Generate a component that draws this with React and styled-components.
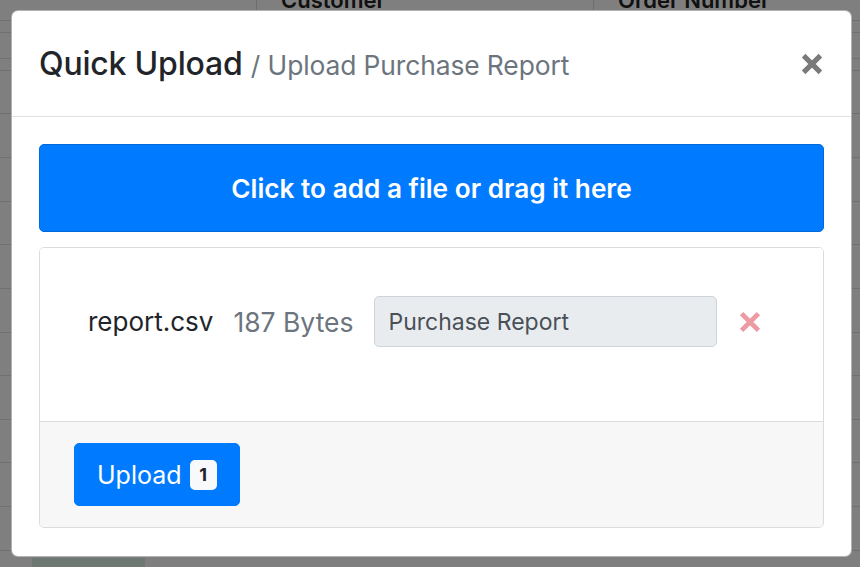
import React from "react";
import styled, { createGlobalStyle } from "styled-components";

const Global = createGlobalStyle`
  html, body { margin: 0; padding: 0; }
  body {
    width: 860px; height: 567px; overflow: hidden;
    background: #fff;
    font-family: Inter, "Noto Sans", "Liberation Sans", sans-serif;
  }
`;

const Page = styled.div`
  position: relative;
  width: 860px;
  height: 567px;
  overflow: hidden;
`;

const Table = styled.div`
  display: flex;
  flex-direction: column;
  margin-top: -20px;
`;

const Row = styled.div`
  display: grid;
  grid-template-columns: 256px 337px 1fr;
  height: ${(p) => p.$h}px;
  border-bottom: 1px solid #e0e0e0;
  box-sizing: border-box;
  align-items: center;
  font-size: 22px;
  color: #222;
`;

const Cell = styled.div`
  padding-left: ${(p) => p.$pad ?? 24}px;
  height: 100%;
  display: flex;
  align-items: ${(p) => (p.$top ? "flex-start" : "center")};
  padding-top: ${(p) => p.$top ?? 0}px;
  box-sizing: border-box;
  border-left: ${(p) => (p.$div ? "1px solid #ddd" : "none")};
  font-weight: ${(p) => (p.$head ? 600 : 400)};
`;

const Tag = styled.span`
  display: inline-block;
  width: 113px;
  height: 40px;
  background: #dcf1e6;
`;

const Backdrop = styled.div`
  position: absolute;
  inset: 0;
  background: rgba(0, 0, 0, 0.5);
`;

const Modal = styled.div`
  position: absolute;
  left: 11px;
  top: 10px;
  width: 841px;
  height: 547px;
  box-sizing: border-box;
  background: #fff;
  border: 1px solid rgba(0, 0, 0, 0.3);
  border-radius: 7px;
  display: flex;
  flex-direction: column;
`;

const Header = styled.div`
  display: flex;
  align-items: center;
  justify-content: space-between;
  height: 106px;
  box-sizing: border-box;
  padding: 0 27px 0 27px;
  border-bottom: 1px solid #dee2e6;
`;

const Title = styled.h4`
  margin: 0;
  font-size: 32px;
  font-weight: 500;
  color: #212529;
  letter-spacing: -0.2px;
`;

const Sub = styled.small`
  font-size: 26.4px;
  font-weight: 400;
  color: #6c757d;
  letter-spacing: -0.1px;
`;

const Close = styled.button`
  border: 0;
  background: none;
  padding: 0;
  margin: 0;
  width: 24px;
  height: 24px;
  display: flex;
  align-items: center;
  justify-content: center;
  color: #7a7a7a;
  cursor: pointer;
`;

const Body = styled.div`
  padding: 27px 27px 0 27px;
  display: flex;
  flex-direction: column;
  gap: 15px;
`;

const Drop = styled.div`
  height: 88px;
  background: #007bff;
  border: 1px solid #0069d9;
  box-sizing: border-box;
  border-radius: 5px;
  color: #fff;
  display: flex;
  align-items: center;
  justify-content: center;
  font-size: 26.2px;
  font-weight: 600;
`;

const Card = styled.div`
  height: 281px;
  box-sizing: border-box;
  border: 1px solid #dcdcdc;
  border-radius: 5px;
  display: flex;
  flex-direction: column;
  overflow: hidden;
`;

const CardBody = styled.div`
  height: 175px;
  box-sizing: border-box;
  padding: 48px 48px 0 48px;
  background: #fff;
`;

const FileRow = styled.div`
  display: flex;
  align-items: center;
  height: 51px;
`;

const Name = styled.span`
  font-size: 26px;
  color: #212529;
  margin-right: 20px;
`;

const Size = styled.span`
  font-size: 26.5px;
  color: #6c757d;
  margin-right: 20px;
`;

const Input = styled.input`
  width: 343px;
  height: 51px;
  box-sizing: border-box;
  background: #e9ecef;
  border: 1px solid #ced4da;
  border-radius: 5px;
  padding: 0 14px;
  font-family: inherit;
  font-size: 23px;
  color: #495057;
  margin-right: 21px;
  outline: none;
`;

const Remove = styled.button`
  border: 0;
  background: none;
  padding: 0;
  display: flex;
  color: #ed9aa2;
  cursor: pointer;
`;

const Footer = styled.div`
  flex: 1;
  background: #f7f7f7;
  border-top: 1px solid #dcdcdc;
  padding: 21px 34px;
`;

const UploadBtn = styled.button`
  height: 63px;
  box-sizing: border-box;
  padding: 0 22px 0 22px;
  display: inline-flex;
  align-items: center;
  gap: 8px;
  background: #007bff;
  border: 1px solid #007bff;
  border-radius: 5px;
  color: #fff;
  font-family: inherit;
  font-size: 25px;
  font-weight: 400;
  cursor: pointer;
`;

const Badge = styled.span`
  display: inline-flex;
  align-items: center;
  justify-content: center;
  width: 27px;
  height: 30px;
  background: #f8f9fa;
  color: #212529;
  border-radius: 5px;
  font-size: 18px;
  font-weight: 700;
`;

const XIcon = ({ size, stroke }) => (
  <svg width={size} height={size} viewBox="0 0 20 20">
    <path d="M3 3 L17 17 M17 3 L3 17" stroke="currentColor" strokeWidth={stroke} strokeLinecap="butt" />
  </svg>
);

const rows = [41, 12, 26, 12, 43, 44, 44, 43, 44, 44, 43, 44, 43, 44, 44, 44];

export default function App() {
  const last = rows.length - 1;
  return (
    <Page>
      <Global />
      <Table>
        {rows.map((h, i) => (
          <Row key={i} $h={h}>
            <Cell $pad={i === last ? 32 : 24} $top={i === last ? 7 : undefined}>
              {i === last ? <Tag /> : null}
            </Cell>
            <Cell $div={i === 0} $head={i === 0} $top={i === last ? 13 : undefined}>
              {i === 0 ? "Customer" : i === last ? "DUST ltd" : ""}
            </Cell>
            <Cell $div={i === 0} $head={i === 0} $top={i === last ? 13 : undefined}>
              {i === 0 ? "Order Number" : i === last ? "4A0555" : ""}
            </Cell>
          </Row>
        ))}
      </Table>
      <Backdrop />
      <Modal>
        <Header>
          <Title>
            Quick Upload <Sub>/ Upload Purchase Report</Sub>
          </Title>
          <Close aria-label="Close">
            <XIcon size={24} stroke={4.2} />
          </Close>
        </Header>
        <Body>
          <Drop>Click to add a file or drag it here</Drop>
          <Card>
            <CardBody>
              <FileRow>
                <Name>report.csv</Name>
                <Size>187 Bytes</Size>
                <Input readOnly value="Purchase Report" />
                <Remove aria-label="Remove">
                  <XIcon size={24} stroke={4} />
                </Remove>
              </FileRow>
            </CardBody>
            <Footer>
              <UploadBtn>
                Upload <Badge>1</Badge>
              </UploadBtn>
            </Footer>
          </Card>
        </Body>
      </Modal>
    </Page>
  );
}
